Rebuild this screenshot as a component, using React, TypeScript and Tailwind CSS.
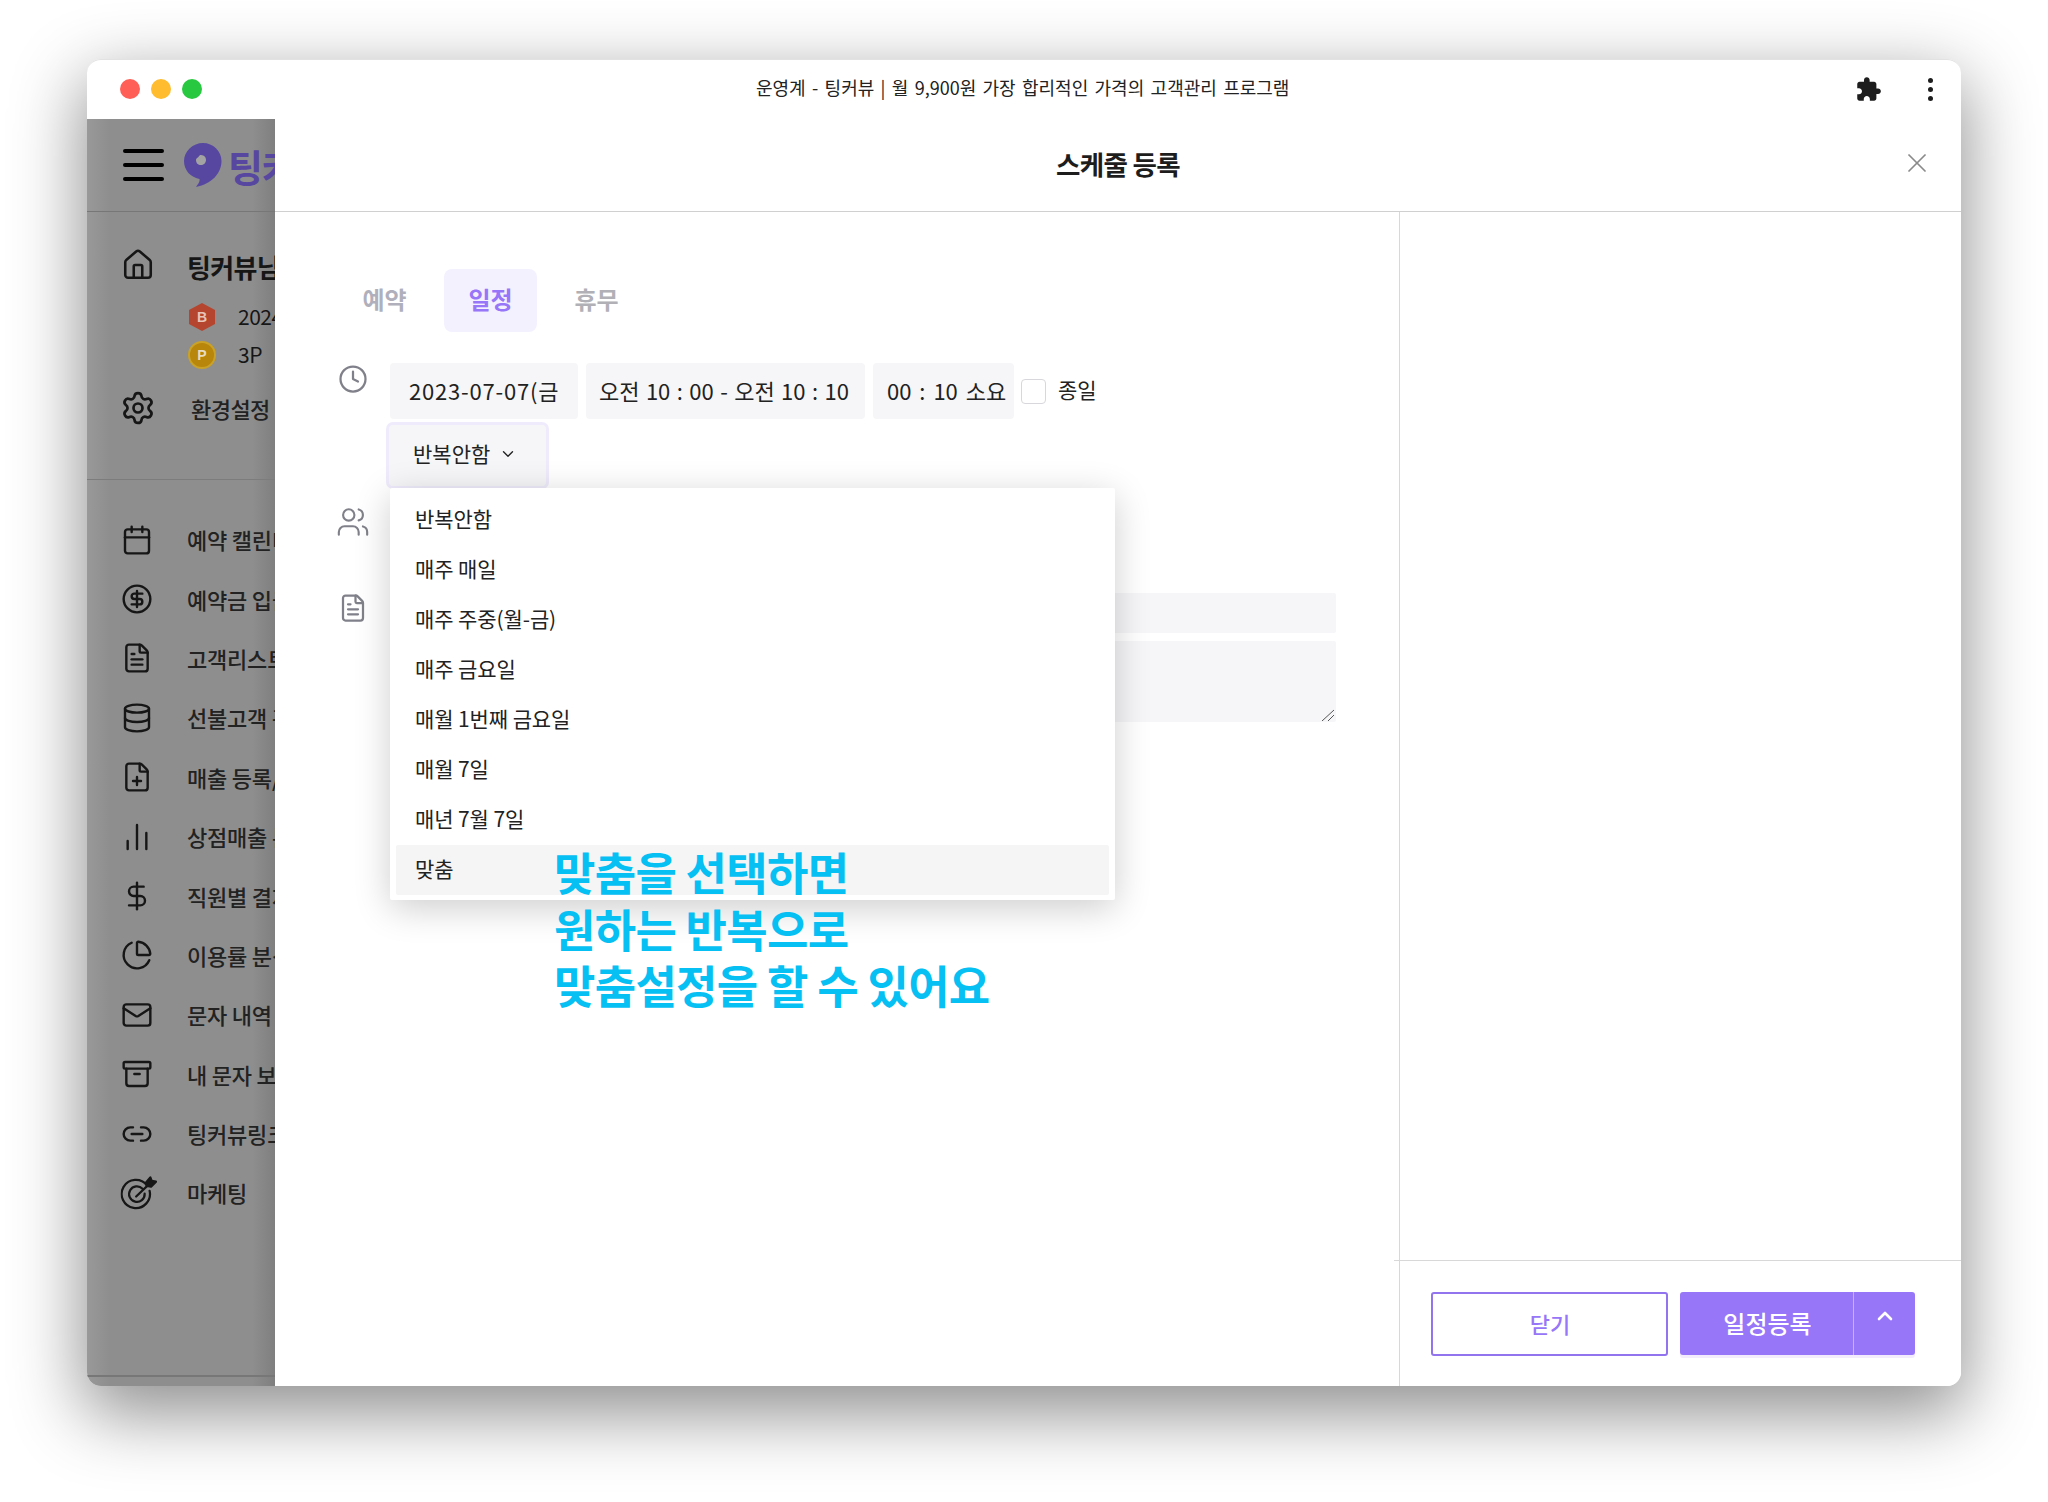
import React from "react";
import { House, Settings, Calendar, CircleDollarSign, FileText, Database, FilePlus, ChartNoAxesColumn, DollarSign, ChartPie, Mail, Archive, Link2, Users, Clock, X, ChevronDown, ChevronUp } from "lucide-react";

function Dart({ className }: { className?: string }) {
  return (
    <svg viewBox="0 0 26 26" className={className + " scale-[1.15] translate-x-[2px]"} fill="none" stroke="currentColor" strokeWidth="1.6" strokeLinecap="round" strokeLinejoin="round">
      <path d="M18.600 7.500A10 10 0 1 0 20.500 11.500" />
      <path d="M15.500 10A5.500 5.500 0 1 0 17 13.500" />
      <path d="M11 15.500L22 5" />
      <path d="M18 5.500L21 2L22 4.500L25 5L21.500 8.500L18.500 8Z" fill="currentColor" />
    </svg>
  );
}

const menu = [
  { icon: Calendar, label: "예약 캘린더" },
  { icon: CircleDollarSign, label: "예약금 입금" },
  { icon: FileText, label: "고객리스트" },
  { icon: Database, label: "선불고객 관리" },
  { icon: FilePlus, label: "매출 등록/" },
  { icon: ChartNoAxesColumn, label: "상점매출 분석" },
  { icon: DollarSign, label: "직원별 결제" },
  { icon: ChartPie, label: "이용률 분석" },
  { icon: Mail, label: "문자 내역" },
  { icon: Archive, label: "내 문자 보관함" },
  { icon: Link2, label: "팅커뷰링크" },
  { icon: Dart, label: "마케팅" },
];

const options = ["반복안함", "매주 매일", "매주 주중(월-금)", "매주 금요일", "매월 1번째 금요일", "매월 7일", "매년 7월 7일", "맞춤"];

function Sidebar() {
  return (
    <aside className="w-[188px] shrink-0 overflow-hidden flex flex-col rounded-bl-[14px] bg-[linear-gradient(90deg,#999999_0%,#8e8e8e_12%,#8e8e8e_88%,#7f7f7f_100%)] text-[#161616]">
      <div className="h-[93px] shrink-0 border-b border-[#777] flex items-center pl-[36px] gap-[20px] w-[300px]">
        <div className="flex flex-col gap-[10px] w-[41px]">
          <span className="block h-[4px] rounded bg-black" />
          <span className="block h-[4px] rounded bg-black" />
          <span className="block h-[4px] rounded bg-black" />
        </div>
        <svg viewBox="0 0 38 44" className="w-[38px] h-[44px]">
          <path d="M19 0C29 0 37.500 8 37.500 18C37.500 30 28 41 12 44C15 40 16 38 15.500 36C6 34 0 27 0 18C0 8 9 0 19 0Z" fill="#5747a0" />
          <path d="M16 12C19 12 22 13 22 17C22 20 19.500 22 17 22C14 22 12 20 12 17C12 15 14.500 14.500 16 12Z" fill="#a3a3a3" />
        </svg>
        <span className="text-[38px] font-bold text-[#5747a0] -ml-[14px] tracking-tight whitespace-nowrap">팅커뷰</span>
      </div>
      <div className="h-[268px] shrink-0 border-b border-[#7c7c7c] pt-[35px] w-[300px]">
        <div className="flex items-center h-[36px]">
          <House className="ml-[34px] w-[34px] h-[34px]" strokeWidth={1.8} />
          <span className="ml-[32px] pt-[3px] text-[26px] font-bold tracking-tight whitespace-nowrap">팅커뷰님</span>
        </div>
        <div className="flex items-center h-[40px] mt-[14px] pl-[102px]">
          <svg viewBox="0 0 26 28" className="w-[26px] h-[28px]">
            <path d="M13 0L26 7V21L13 28L0 21V7Z" fill="#b5452e" />
            <text x="13" y="19" fontSize="14" fontWeight="700" fill="#e8c4b8" textAnchor="middle" fontFamily="Liberation Sans, sans-serif">B</text>
          </svg>
          <span className="ml-[23px] text-[21px] tracking-tight whitespace-nowrap">2024</span>
        </div>
        <div className="flex items-center h-[36px] pl-[101px]">
          <span className="w-[28px] h-[28px] rounded-full bg-[#b8860b] border-[2px] border-[#c9a227] flex items-center justify-center text-[14px] font-bold text-[#e8dcc0] font-['Liberation_Sans',sans-serif]">P</span>
          <span className="ml-[22px] text-[21px] tracking-tight whitespace-nowrap">3P</span>
        </div>
        <div className="flex items-center h-[40px] mt-[15px]">
          <Settings className="ml-[33px] w-[36px] h-[36px]" strokeWidth={1.8} />
          <span className="ml-[35px] text-[22px] font-medium tracking-tight whitespace-nowrap text-[#222]">환경설정</span>
        </div>
      </div>
      <div className="flex-1 flex flex-col pt-[30px] w-[300px]">
        {menu.map((m) => (
          <div key={m.label} className="flex items-center h-[59.4px] shrink-0">
            <m.icon className="ml-[34px] w-[32px] h-[32px]" strokeWidth={1.8} />
            <span className="ml-[34px] text-[22px] font-medium tracking-[-0.2px] whitespace-nowrap text-[#222]">{m.label}</span>
          </div>
        ))}
        <div className="mt-auto mb-[9px] border-t-[2px] border-[#777]" />
      </div>
    </aside>
  );
}

function Pill({ className, children }: { className: string; children: React.ReactNode }) {
  return <div className={"h-[56px] pb-[2px] rounded-[4px] bg-[#f6f6f8] flex items-center whitespace-nowrap overflow-hidden text-[22px] text-[#222] " + className}>{children}</div>;
}

function Form() {
  return (
    <div className="w-[1125px] shrink-0 border-r border-[#d8d8d8] pl-[63px] pt-[57px]">
      <div className="flex gap-[13px] text-[24px] font-bold">
        <div className="w-[93px] h-[63px] pb-[3px] flex items-center justify-center text-[#b0b0bc]">예약</div>
        <div className="w-[93px] h-[63px] pb-[3px] flex items-center justify-center rounded-[8px] bg-[#f4f1ff] text-[#9776f7]">일정</div>
        <div className="w-[93px] h-[63px] pb-[3px] flex items-center justify-center text-[#b0b0b6]">휴무</div>
      </div>
      <div className="flex mt-[31px]">
        <div className="w-[52px] shrink-0 flex flex-col">
          <Clock className="w-[30px] h-[30px] mt-[1px] text-[#80808a]" strokeWidth={1.8} />
          <Users className="w-[34px] h-[34px] -ml-[2px] mt-[111px] text-[#80808a]" strokeWidth={1.5} />
          <FileText className="w-[30px] h-[30px] mt-[54px] text-[#80808a]" strokeWidth={1.8} />
        </div>
        <div className="relative flex-1 pr-[63px]">
          <div className="flex items-center">
            <Pill className="w-[188px] pl-[19px] tracking-[0.8px]">2023-07-07(금</Pill>
            <Pill className="w-[279px] ml-[8px] pl-[13px] [word-spacing:1.500px]">오전 10 : 00 - 오전 10 : 10</Pill>
            <Pill className="w-[141px] ml-[8px] pl-[14px] [word-spacing:3px]">00 : 10 소요</Pill>
            <span className="ml-[7px] w-[25px] h-[25px] rounded-[4px] border border-[#d8d8dc] bg-white" />
            <span className="ml-[12px] pb-[2px] text-[21px] text-[#222]">종일</span>
          </div>
          <div className="mt-[6px] -ml-[1px] w-[157px] h-[61px] pb-[3px] rounded-[4px] bg-[#f6f6f8] ring-[3px] ring-[#efebfc] flex items-center pl-[24px] gap-[9px] text-[21px] text-[#222] whitespace-nowrap">
            반복안함 <ChevronDown className="w-[18px] h-[18px]" strokeWidth={1.8} />
          </div>
          <div className="mt-[107px] h-[40px] rounded-[2px] bg-[#f6f6f8]" />
          <div className="mt-[8px] h-[81px] rounded-[2px] bg-[#f6f6f8] relative">
            <svg viewBox="0 0 14 12" className="absolute right-[1px] bottom-[1px] w-[14px] h-[12px]">
              <path d="M1 12L13 1M7 12L13 6" stroke="#555" strokeWidth="1" fill="none" />
            </svg>
          </div>
          <div className="absolute left-0 top-[125px] w-[725px] h-[412px] bg-white rounded-[2px] shadow-[0_8px_36px_rgba(0,0,0,0.2)] pt-[6px] px-[6px]">
            {options.map((o, i) => (
              <div key={o} className={"h-[50px] flex items-center pl-[19px] text-[21px] tracking-[-0.1px] text-[#222] rounded-[2px] " + (i === 7 ? "bg-[#f5f5f6] mt-[1px] pb-[2px]" : "")}>{o}</div>
            ))}
          </div>
          <div className="absolute left-[164px] top-[481px] text-[45px] leading-[56.500px] font-bold tracking-[-0.7px] text-[#06bff3] whitespace-nowrap">
            맞춤을 선택하면<br />원하는 반복으로<br />맞춤설정을 할 수 있어요
          </div>
        </div>
      </div>
    </div>
  );
}

function RightPanel() {
  return (
    <div className="flex-1 flex flex-col justify-end relative">
      <div className="h-[126px] border-t border-[#d8d8d8] -ml-[6px] pt-[31px] pl-[37px] flex">
        <button className="w-[237px] h-[64px] pl-[1px] pb-[2px] rounded-[3px] border-[2px] border-[#9174ee] bg-white text-[22px] font-medium text-[#9776f7]">닫기</button>
        <div className="ml-[12px] w-[235px] h-[63px] rounded-[3px] bg-[#9776f7] text-white flex shadow-[0_3px_0_#f3ecfd]">
          <div className="w-[174px] pl-[2px] pb-[1px] flex items-center justify-center text-[24px] font-medium border-r border-[#c4b2fa]">일정등록</div>
          <div className="flex-1 flex items-start justify-center pt-[12px]"><ChevronUp className="w-[24px] h-[24px]" strokeWidth={2.6} /></div>
        </div>
      </div>
    </div>
  );
}

export default function App() {
  return (
    <div className="w-[2048px] h-[1502px] bg-white pl-[87px] pt-[59px] overflow-hidden font-['Noto_Sans_CJK_KR','Noto_Sans',sans-serif]">
      <div className="w-[1874px] h-[1327px] rounded-[14px] bg-white shadow-[0_24px_70px_4px_rgba(0,0,0,0.44)] flex flex-col">
        <header className="h-[60px] shrink-0 flex items-center relative rounded-t-[14px] border-t border-[#e2e2e2]">
          <div className="flex gap-[11px] pl-[33px] pb-[2px]">
            <span className="w-[20px] h-[20px] rounded-full bg-[#ff5f57]" />
            <span className="w-[20px] h-[20px] rounded-full bg-[#febc2e]" />
            <span className="w-[20px] h-[20px] rounded-full bg-[#28c840]" />
          </div>
          <div className="absolute left-[669px] top-[14px] text-[18px] leading-[26px] [word-spacing:2.300px] text-[#222] whitespace-nowrap">운영계 - 팅커뷰 | 월 9,900원 가장 합리적인 가격의 고객관리 프로그램</div>
          <svg viewBox="0 0 24 24" className="absolute left-[1768px] top-[16px] w-[27px] h-[27px] text-[#1d1d1d]" fill="currentColor">
            <path d="M20.500 11H19V7c0-1.100-.9-2-2-2h-4V3.500C13 2.120 11.880 1 10.500 1S8 2.120 8 3.500V5H4c-1.100 0-1.990.9-1.990 2v3.800H3.500c1.490 0 2.700 1.210 2.700 2.700s-1.210 2.700-2.700 2.700H2V20c0 1.100.9 2 2 2h3.800v-1.500c0-1.490 1.210-2.700 2.700-2.700 1.490 0 2.700 1.210 2.700 2.700V22H17c1.100 0 2-.9 2-2v-4h1.500c1.380 0 2.500-1.120 2.500-2.500S21.880 11 20.500 11z" />
          </svg>
          <div className="absolute left-[1841px] top-[18px] flex flex-col gap-[4px]">
            <span className="w-[5px] h-[5px] rounded-full bg-[#1d1d1d]" />
            <span className="w-[5px] h-[5px] rounded-full bg-[#1d1d1d]" />
            <span className="w-[5px] h-[5px] rounded-full bg-[#1d1d1d]" />
          </div>
        </header>
        <div className="flex-1 flex min-h-0">
          <Sidebar />
          <main className="flex-1 flex flex-col rounded-br-[14px] bg-white">
            <div className="h-[93px] shrink-0 border-b border-[#d0d0d0] flex items-center justify-center relative">
              <span className="text-[26.500px] font-bold tracking-tight text-[#1d1d1d] pb-[2px]">스케줄 등록</span>
              <X className="absolute right-[28px] top-[28px] w-[32px] h-[32px] text-[#8a8a8a]" strokeWidth={1.3} />
            </div>
            <div className="flex-1 flex min-h-0">
              <Form />
              <RightPanel />
            </div>
          </main>
        </div>
      </div>
    </div>
  );
}
